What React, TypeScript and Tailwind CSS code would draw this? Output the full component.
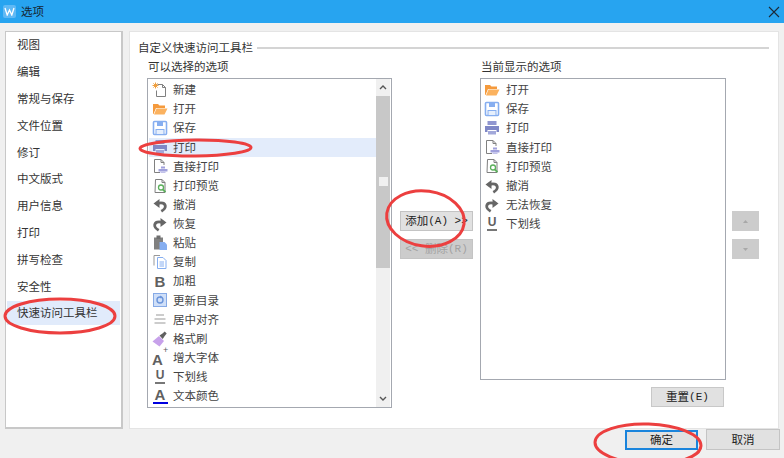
import React from "react";

const PageOutline = () => (
  <path d="M3.5 1.5h6.5l3 3v10h-10z M10 1.5v3h3" fill="#fff" stroke="#7f7f7f" strokeWidth="1" />
);

function Icon({ name }: { name: string }) {
  if (name === "bold")
    return <span className="w-[16px] h-[16px] flex items-center justify-center font-['Liberation_Sans'] font-bold text-[15px] leading-none text-[#606060]">B</span>;
  if (name === "grow")
    return (
      <span className="w-[16px] h-[16px] relative font-['Liberation_Sans'] font-bold text-[#606060] block">
        <span className="absolute left-0 top-[1px] text-[15px] leading-[18px]">A</span>
        <span className="absolute left-[11px] top-[-5px] text-[9px] leading-[10px] font-normal">+</span>
      </span>
    );
  if (name === "underline")
    return (
      <span className="w-[16px] h-[16px] flex flex-col items-center font-['Liberation_Sans'] font-bold text-[#606060]">
        <span className="text-[12px] leading-[12px]">U</span>
        <span className="mt-[1px] w-[10px] h-[2px] bg-[#777]" />
      </span>
    );
  if (name === "color")
    return (
      <span className="w-[16px] h-[18px] flex flex-col items-center font-['Liberation_Sans'] font-bold text-[#606060]">
        <span className="text-[15px] leading-[15px]">A</span>
        <span className="w-[15px] h-[2px] bg-[#0000e0]" />
      </span>
    );
  return (
    <svg width="16" height="16" viewBox="0 0 16 16" className="block shrink-0">
      {name === "new" && (
        <>
          <path d="M5.5 2.5h5l3 3v9h-9v-6" fill="#fff" stroke="#808080" />
          <path d="M10.5 2.5v3h3" fill="none" stroke="#808080" />
          <path d="M3.5 0.5v6M0.5 3.5h6M1.4 1.4l4.2 4.2M5.6 1.4l-4.2 4.2" stroke="#f0a040" strokeWidth="1" />
        </>
      )}
      {name === "open" && (
        <>
          <path d="M1 3h5l1.500 1.500H13V7H4L1.500 13H1z" fill="#f59a3c" />
          <path d="M4.500 7.500H15.500L12.500 13.500H2z" fill="#fbb25f" />
        </>
      )}
      {name === "save" && (
        <>
          <rect x="1.500" y="1.500" width="13" height="13" rx="1" fill="#fff" stroke="#86aef0" strokeWidth="1.600" />
          <rect x="5" y="1.500" width="6" height="4.500" fill="#86aef0" />
          <rect x="4" y="9.500" width="8" height="5" fill="#e6effc" stroke="#86aef0" />
        </>
      )}
      {name === "print" && (
        <>
          <rect x="3.500" y="1" width="9" height="4" fill="#9096d0" />
          <path d="M1 6h14v6h-2.500v-2h-9v2H1z" fill="#7f87c6" />
          <rect x="4" y="11" width="8" height="3.500" fill="#a2a8da" />
        </>
      )}
      {name === "direct" && (
        <>
          <path d="M8 14.500H2.500v-13h6.500l3 3v2.500" fill="#fff" stroke="#808080" />
          <path d="M9 1.500v3h3" fill="none" stroke="#808080" />
          <rect x="9" y="8.500" width="4" height="2" fill="#a0a0dc" />
          <path d="M6.500 11h9v2.500h-9z" fill="#a0a0dc" />
          <rect x="8.500" y="13.500" width="5" height="1.500" fill="#c2c2ea" />
        </>
      )}
      {name === "preview" && (
        <>
          <PageOutline />
          <circle cx="9" cy="9.500" r="2.500" fill="#fff" stroke="#5bb05b" strokeWidth="1.300" />
          <path d="M10.800 11.500l2.700 2.700" stroke="#5bb05b" strokeWidth="1.800" />
        </>
      )}
      {name === "undo" && (
        <>
          <path d="M1.500 6.500L7.500 2v9z" fill="#666" />
          <path d="M6 6.300c3.500-1 7-.3 7.300 2.700.2 2-1.500 3.800-4 5.300" fill="none" stroke="#666" strokeWidth="2.800" />
        </>
      )}
      {name === "redo" && (
        <>
          <path d="M14.500 6.500L8.500 2v9z" fill="#666" />
          <path d="M10 6.300c-3.500-1-7-.3-7.300 2.700-.2 2 1.500 3.800 4 5.300" fill="none" stroke="#666" strokeWidth="2.800" />
        </>
      )}
      {name === "paste" && (
        <>
          <rect x="2" y="2.500" width="9" height="12" fill="#808080" />
          <rect x="4.500" y="0.500" width="4" height="3.500" fill="#6e6e6e" />
          <path d="M7.500 7h5l2.500 2.500V15H7.500z" fill="#86aef0" />
        </>
      )}
      {name === "copy" && (
        <>
          <path d="M2 11.500V1.500h6" fill="none" stroke="#999" />
          <path d="M5.500 3.500h5.500l3 3v8h-8.500z" fill="#fff" stroke="#86aef0" />
          <path d="M7.500 8h4.500M7.500 10h4.500M7.500 12h4.500" stroke="#86aef0" />
        </>
      )}
      {name === "toc" && (
        <>
          <rect x="1.500" y="1.500" width="13" height="13" fill="#cfdff8" stroke="#86aae6" />
          <circle cx="8" cy="8" r="3" fill="none" stroke="#6a94da" strokeWidth="1.400" />
          <path d="M8 3.500l2.500 1.500L8 6.500z" fill="#6a94da" />
        </>
      )}
      {name === "center" && (
        <path d="M4 4h8M2.500 8h11M2.500 12h11" stroke="#9a9a9a" strokeWidth="1.100" />
      )}
      {name === "brush" && (
        <>
          <path d="M0.500 10.500L7 5l5 5-4.500 5.500z" fill="#c7a1ea" />
          <path d="M7.500 4.500l3-2 2.200-2 2 2-2 2.500-2 3z" fill="#606060" />
        </>
      )}
    </svg>
  );
}

const leftItems: [string, string][] = [
  ["new", "新建"], ["open", "打开"], ["save", "保存"], ["print", "打印"], ["direct", "直接打印"],
  ["preview", "打印预览"], ["undo", "撤消"], ["redo", "恢复"], ["paste", "粘贴"], ["copy", "复制"],
  ["bold", "加粗"], ["toc", "更新目录"], ["center", "居中对齐"], ["brush", "格式刷"], ["grow", "增大字体"],
  ["underline", "下划线"], ["color", "文本颜色"],
];
const rightItems: [string, string][] = [
  ["open", "打开"], ["save", "保存"], ["print", "打印"], ["direct", "直接打印"], ["preview", "打印预览"],
  ["undo", "撤消"], ["redo", "无法恢复"], ["underline", "下划线"],
];
const navItems = ["视图", "编辑", "常规与保存", "文件位置", "修订", "中文版式", "用户信息", "打印", "拼写检查", "安全性", "快速访问工具栏"];

export default function App() {
  return (
    <div className="relative w-[784px] h-[458px] overflow-hidden bg-[#f0f0f0] font-['Noto_Sans_CJK_SC','Noto_Sans',sans-serif] text-[11.500px] text-[#333] flex flex-col">
      {/* title bar */}
      <div className="h-[23px] shrink-0 bg-[#27a4f0] flex items-center pl-[3px] pr-[4px]">
        <div className="w-[13px] h-[13px] rounded-[2px] bg-[#5fb9f5] flex items-center justify-center">
          <svg width="11" height="9" viewBox="0 0 11 9"><path d="M1 1l2.200 7L5.500 3l2.300 5L10 1" fill="none" stroke="#fff" strokeWidth="1.300" /></svg>
        </div>
        <span className="ml-[5px] text-[#14232f] text-[11.500px] leading-none">选项</span>
        <svg className="ml-auto" width="12" height="12" viewBox="0 0 12 12"><path d="M1 1l10 10M11 1L1 11" stroke="#1b2a38" strokeWidth="1.100" /></svg>
      </div>

      {/* body */}
      <div className="flex pt-[8px] pl-[5px] gap-[6px] h-[406px] shrink-0">
        <div className="w-[118px] h-[398px] bg-white border-2 border-[#c8c8c8] border-t-[1.500px] border-l-[1.500px] pt-[1px] pl-[1px] pr-[1px] flex flex-col gap-[2.800px]">
          {navItems.map((n, i) => (
            <div key={n} className={`h-[24px] shrink-0 flex items-center pl-[10px] ${i === 10 ? "bg-[#e1ebfb]" : ""}`}>{n}</div>
          ))}
        </div>

        <div className="w-[650px] h-[398px] bg-white border border-[#e4e4e4] pl-[9px] pt-[7px] flex flex-col">
          <div className="h-[17px] flex items-center gap-[4px] pr-[9px] shrink-0">
            <span className="leading-none whitespace-nowrap -ml-[1px]">自定义快速访问工具栏</span>
            <div className="flex-1 h-[2px] bg-[#d4d4d4]" />
          </div>

          <div className="flex pl-[8px] pt-[3px]">
            {/* left column */}
            <div className="w-[245px] shrink-0 flex flex-col">
              <div className="h-[19px] pl-[1px] flex items-start leading-[15px]">可以选择的选项</div>
              <div className="h-[330px] border border-[#a4a8b0] flex">
                <div className="flex-1 pl-[1px] pt-[1.400px] text-[#444]">
                  {leftItems.map(([ic, t], i) => (
                    <div key={t} className={`h-[19.125px] flex items-center pl-[3px] gap-[5px] ${i === 3 ? "bg-[#e3ecfb]" : ""}`}>
                      <Icon name={ic} />
                      <span className="leading-none">{t}</span>
                    </div>
                  ))}
                </div>
                <div className="w-[14px] mr-[1px] shrink-0 bg-[#f0f0f0] flex flex-col">
                  <div className="h-[17px] flex items-center justify-center">
                    <svg width="8" height="5" viewBox="0 0 8 5"><path d="M1 4l3-3 3 3" fill="none" stroke="#555" strokeWidth="1.400" /></svg>
                  </div>
                  <div className="h-[172px] bg-[#c8c8c8] pt-[81px] flex justify-center">
                    <div className="w-[9px] h-[9px] bg-[#f0f0f0]" />
                  </div>
                  <div className="mt-auto h-[17px] flex items-center justify-center">
                    <svg width="8" height="5" viewBox="0 0 8 5"><path d="M1 1l3 3 3-3" fill="none" stroke="#555" strokeWidth="1.400" /></svg>
                  </div>
                </div>
              </div>
            </div>

            {/* middle buttons */}
            <div className="w-[88px] shrink-0 pl-[8px] pt-[152px] flex flex-col gap-[8px]">
              <div className="w-[73px] h-[20px] bg-[#e1e1e1] border border-[#c4c4c4] flex items-center justify-center text-[#222] leading-none whitespace-pre">
                添加<span className="font-['Liberation_Mono'] text-[11px]">(A) &gt;&gt;</span>
              </div>
              <div className="w-[73px] h-[20px] bg-[#cccccc] border border-[#c4c4c4] flex items-center justify-center text-[#a2a2a2] leading-none whitespace-pre">
                <span className="font-['Liberation_Mono'] text-[11px]">&lt;&lt; </span>删除<span className="font-['Liberation_Mono'] text-[11px]">(R)</span>
              </div>
            </div>

            {/* right column */}
            <div className="w-[246px] shrink-0 flex flex-col">
              <div className="h-[19px] pl-[1px] flex items-start leading-[15px]">当前显示的选项</div>
              <div className="h-[302px] border border-[#a4a8b0] pt-[1.400px] text-[#444]">
                {rightItems.map(([ic, t]) => (
                  <div key={t} className="h-[19.125px] flex items-center pl-[3px] gap-[6px]">
                    <Icon name={ic} />
                    <span className="leading-none">{t}</span>
                  </div>
                ))}
              </div>
              <div className="mt-[7px] mr-[2px] self-end w-[73px] h-[20px] bg-[#e1e1e1] border border-[#c8c8c8] flex items-center justify-center text-[#222] leading-none whitespace-pre">
                重置<span className="font-['Liberation_Mono'] text-[11px]">(E)</span>
              </div>
            </div>

            {/* arrows */}
            <div className="ml-[6px] w-[27px] pt-[152px] flex flex-col gap-[8px] shrink-0">
              <div className="w-[27px] h-[20px] bg-[#cccccc] flex items-center justify-center">
                <svg width="5" height="3" viewBox="0 0 5 3"><path d="M0 3l2.500-3L5 3z" fill="#a8a8a8" /></svg>
              </div>
              <div className="w-[27px] h-[20px] bg-[#cccccc] flex items-center justify-center">
                <svg width="5" height="3" viewBox="0 0 5 3"><path d="M0 0l2.500 3L5 0z" fill="#a8a8a8" /></svg>
              </div>
            </div>
          </div>
        </div>
      </div>

      {/* footer */}
      <div className="flex justify-end items-start pt-[1px] pr-[4px] gap-[8px] text-[#222]">
        <div className="w-[73px] h-[20px] bg-[#e1e1e1] border-2 border-[#1a84dc] flex items-center justify-center leading-none">确定</div>
        <div className="w-[74px] h-[21px] -mt-[1px] bg-[#e1e1e1] border border-[#c4c4c4] flex items-center justify-center leading-none">取消</div>
      </div>

      {/* hand-drawn red marks lying over the dialog */}
      <svg className="absolute inset-0 pointer-events-none" width="784" height="458" viewBox="0 0 784 458">
        <g fill="none" stroke="#ec3f3f" strokeWidth="3">
          <ellipse cx="195.500" cy="148" rx="55.500" ry="8" transform="rotate(-0.500 195 148)" />
          <ellipse cx="60" cy="316" rx="55" ry="17" />
          <ellipse cx="425.500" cy="218.500" rx="39" ry="27.500" transform="rotate(8 425 218)" />
          <ellipse cx="648" cy="444" rx="53" ry="20" transform="rotate(2 648 444)" />
        </g>
      </svg>
    </div>
  );
}
